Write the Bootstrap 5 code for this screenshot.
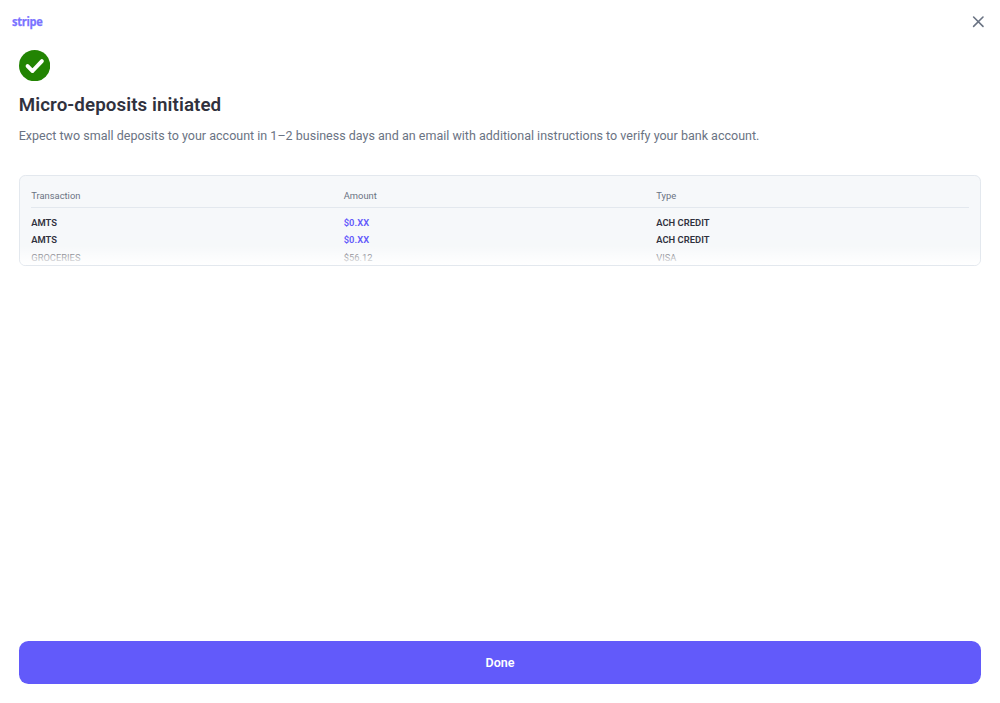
<!DOCTYPE html>
<html lang="en">
<head>
<meta charset="utf-8">
<meta name="viewport" content="width=device-width, initial-scale=1">
<title>Micro-deposits initiated</title>
<link href="https://cdn.jsdelivr.net/npm/bootstrap@5.3.0/dist/css/bootstrap.min.css" rel="stylesheet">
<style>
body{font-family:Roboto,sans-serif;color:#30313d;background:#fff}
.topbar{height:43.75px;padding:0 15.5px 0 11.9px}
.brand{display:inline-block;font:700 12.6px/15px "Open Sans",sans-serif;letter-spacing:-.35px;color:#7a73ff;-webkit-text-stroke:.25px #7a73ff;transform:scaleX(.88);transform-origin:0 50%}
.close-x{width:13px;height:13px;color:#6a7383}
.content{padding:6.25px 18.75px 18.75px}
.check{width:31.25px;height:31.25px}
h1{color:#30313d;font-size:18.75px;line-height:25px;font-weight:600;letter-spacing:.09px;margin:11.5px 0 9.5px}
.lead-text{font-size:12.5px;line-height:18.75px;letter-spacing:.01px;color:#6a7383}
.statement{height:91px;margin-top:28.5px;padding:11px 11.5px;border:1px solid #e3e8ee;border-radius:6.25px;background:#f6f8fa;font-size:9.375px;line-height:17.1px}
.statement .head{color:#6a7383;border-bottom:1px solid #e3e8ee;padding-bottom:3.5px;margin-bottom:6.3px}
.strong-row{font-weight:600;letter-spacing:.03px}
.amt{color:#625afa}
.plain-row{color:#30313d}
.fade-out{height:19px;background:linear-gradient(rgba(255,255,255,0),rgba(255,255,255,.48) 45%,#fff)}
.btn-done{--bs-btn-color:#fff;--bs-btn-bg:#625afa;--bs-btn-border-color:#625afa;--bs-btn-hover-color:#fff;--bs-btn-hover-bg:#5149e6;height:43.75px;border:0;border-radius:9.4px;font-size:12.5px;font-weight:600;padding:1px 0 0}
</style>
</head>
<body>
<div class="d-flex flex-column vh-100 overflow-hidden">
  <header class="topbar d-flex align-items-center justify-content-between flex-shrink-0">
    <span class="brand">stripe</span>
    <button type="button" class="btn p-0 border-0 d-flex" aria-label="Close">
      <svg class="close-x" viewBox="0 0 13 13" fill="none" stroke="currentColor" stroke-width="1.6" stroke-linecap="round"><path d="M1.6 2l9.4 9.4M11 2l-9.4 9.4"/></svg>
    </button>
  </header>
  <main class="content d-flex flex-column flex-grow-1">
    <svg class="check" viewBox="0 0 40 40"><circle cx="20" cy="20" r="20" fill="#228403"/><path d="M11 20.5l6.3 6.4L29.3 14.3" fill="none" stroke="#fff" stroke-width="5" stroke-linecap="round" stroke-linejoin="round"/></svg>
    <h1>Micro-deposits initiated</h1>
    <p class="lead-text mb-0">Expect two small deposits to your account in 1–2 business days and an email with additional instructions to verify your bank account.</p>
    <section class="statement position-relative overflow-hidden">
      <div class="row g-0 head"><div class="col-4">Transaction</div><div class="col-4">Amount</div><div class="col-4">Type</div></div>
      <div class="row g-0 strong-row"><div class="col-4">AMTS</div><div class="col-4 amt">$0.XX</div><div class="col-4">ACH CREDIT</div></div>
      <div class="row g-0 strong-row"><div class="col-4">AMTS</div><div class="col-4 amt">$0.XX</div><div class="col-4">ACH CREDIT</div></div>
      <div class="row g-0 plain-row"><div class="col-4">GROCERIES</div><div class="col-4">$56.12</div><div class="col-4">VISA</div></div>
      <div class="fade-out position-absolute start-0 end-0 bottom-0"></div>
    </section>
    <button type="button" class="btn btn-done w-100 mt-auto">Done</button>
  </main>
</div>
<script src="https://cdn.jsdelivr.net/npm/bootstrap@5.3.0/dist/js/bootstrap.bundle.min.js"></script>
</body>
</html>
